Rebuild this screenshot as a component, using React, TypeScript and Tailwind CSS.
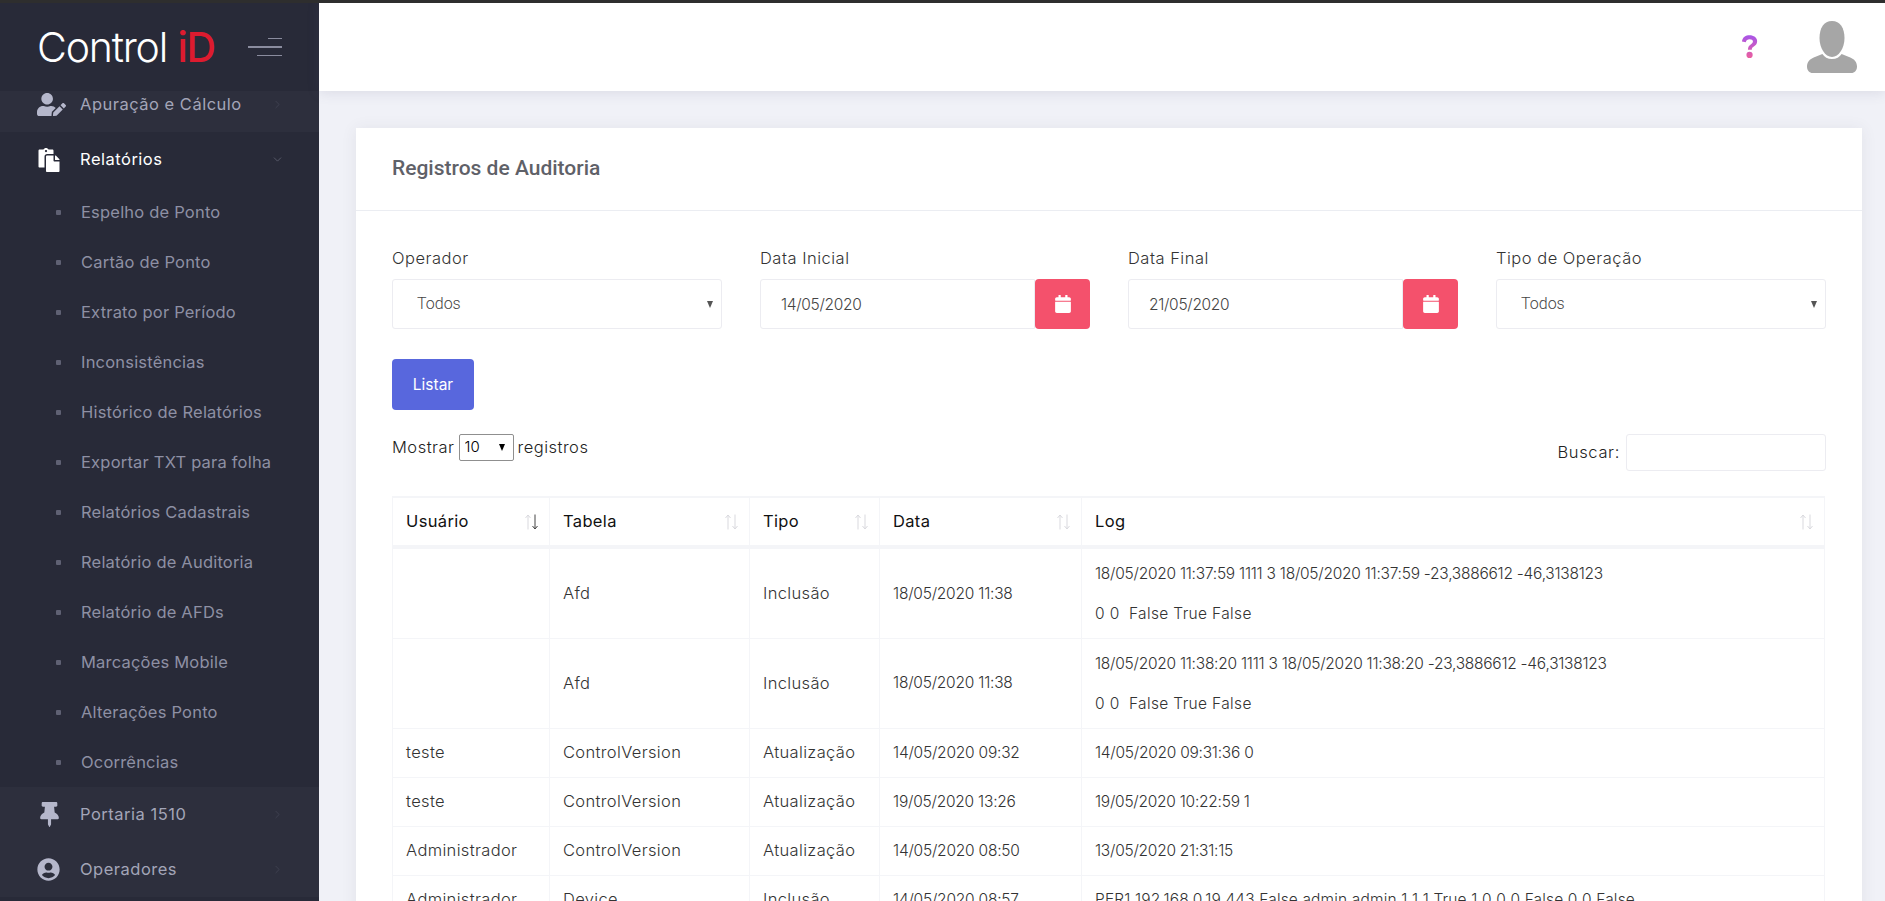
import { ChevronDown, ChevronRight } from 'lucide-react';
import { FaCalendar, FaPaste, FaThumbtack, FaUserCircle, FaUserEdit } from 'react-icons/fa';

const subItems = [
  'Espelho de Ponto',
  'Cartão de Ponto',
  'Extrato por Período',
  'Inconsistências',
  'Histórico de Relatórios',
  'Exportar TXT para folha',
  'Relatórios Cadastrais',
  'Relatório de Auditoria',
  'Relatório de AFDs',
  'Marcações Mobile',
  'Alterações Ponto',
  'Ocorrências',
];

const rows = [
  ['', 'Afd', 'Inclusão', '18/05/2020 11:38', '18/05/2020 11:37:59 1111 3 18/05/2020 11:37:59 -23,3886612 -46,3138123', '0 0  False True False'],
  ['', 'Afd', 'Inclusão', '18/05/2020 11:38', '18/05/2020 11:38:20 1111 3 18/05/2020 11:38:20 -23,3886612 -46,3138123', '0 0  False True False'],
  ['teste', 'ControlVersion', 'Atualização', '14/05/2020 09:32', '14/05/2020 09:31:36 0'],
  ['teste', 'ControlVersion', 'Atualização', '19/05/2020 13:26', '19/05/2020 10:22:59 1'],
  ['Administrador', 'ControlVersion', 'Atualização', '14/05/2020 08:50', '13/05/2020 21:31:15'],
  ['Administrador', 'Device', 'Inclusão', '14/05/2020 08:57', 'PER1 192.168.0.19 443 False admin admin 1 1 1 True 1 0 0 0 False 0 0 False'],
];

const columns = [
  { label: 'Usuário', width: 'w-[157px]', sorted: true },
  { label: 'Tabela', width: 'w-[200px]', sorted: false },
  { label: 'Tipo', width: 'w-[130px]', sorted: false },
  { label: 'Data', width: 'w-[202px]', sorted: false },
  { label: 'Log', width: 'w-auto', sorted: false },
];

const labelClass = 'mb-[9px] block text-[16.500px] font-light leading-6 tracking-[0.5px] text-[#333]';

const NavRow = ({
  icon,
  label,
  active,
  first,
  tint,
}: {
  icon: React.ReactNode;
  label: string;
  active?: boolean;
  first?: boolean;
  tint?: boolean;
}) => (
  <div
    className={`flex h-[55px] shrink-0 items-center pl-[37px] pr-[35px] ${first ? '-mt-[14px]' : ''} ${
      tint ? 'bg-[#2d2f3d]' : ''
    } ${active ? 'text-white' : 'text-[#a3a5b8]'}`}
  >
    <span className={`flex w-[43px] ${active ? 'text-white' : 'text-[#b5b7cb]'}`}>{icon}</span>
    <span className="grow text-[16.500px] tracking-[0.5px]">{label}</span>
    {active ? (
      <ChevronDown size={13} strokeWidth={1} className="text-[#7d7f90]" />
    ) : (
      <ChevronRight size={13} strokeWidth={1} className="text-[#4c4e5e]" />
    )}
  </div>
);

const DateField = ({ value }: { value: string }) => (
  <div className="flex h-[50px]">
    <input
      readOnly
      value={value}
      className="h-full min-w-0 grow rounded-l-[3px] border border-[#ececf1] pl-[20px] text-[15.500px] font-light tracking-[-0.3px] text-[#444] outline-none"
    />
    <button className="flex h-full w-[55px] shrink-0 items-center justify-center rounded-[4px] bg-[#f4516c] text-[18px] text-white">
      <FaCalendar />
    </button>
  </div>
);

const SelectField = () => (
  <div className="relative">
    <select className="h-[50px] w-full appearance-none rounded-[3px] border border-[#ececf1] bg-white pl-[24px] font-['Roboto',sans-serif] text-[16px] font-light text-[#444] outline-none">
      <option>Todos</option>
    </select>
    <span className="pointer-events-none absolute right-[9px] top-[22px] border-x-[3.500px] border-t-[7px] border-x-transparent border-t-[#555]" />
  </div>
);

const SortArrows = ({ sorted }: { sorted: boolean }) => (
  <svg width="13" height="16" viewBox="0 0 13 16" fill="none" strokeWidth="1" className="shrink-0">
    <path d="M3 15.500V1M.5 4 3 1l2.500 3" stroke="#d9d9de" />
    <path d="M10 .5V15M7.500 12l2.500 3 2.500-3" stroke={sorted ? '#444' : '#d9d9de'} />
  </svg>
);

const App = () => {
  return (
    <div className="relative flex h-[901px] w-full overflow-hidden bg-[#f0f1f7] font-['Inter',sans-serif]">
      <div className="absolute left-0 right-0 top-0 z-20 h-[3px] bg-[#2e2e2e]" />

      <aside className="flex w-[319px] shrink-0 flex-col bg-[#282a38]">
        <div className="relative z-10 flex h-[91px] shrink-0 items-center justify-between pl-[37px] pr-[37px] pt-[3px]">
          <span className="text-[41px] font-[350] leading-none tracking-[-1.200px] text-white">
            Control <span className="font-medium text-[#dd1b2f]">iD</span>
          </span>
          <div className="flex w-[34px] flex-col items-end gap-[7px]">
            <span className="h-px w-[14px] bg-[#8a8c9e]" />
            <span className="h-[2px] w-[34px] bg-[#8a8c9e]" />
            <span className="h-px w-[25px] bg-[#8a8c9e]" />
          </div>
        </div>
        <nav className="flex grow flex-col overflow-hidden">
          <NavRow first tint icon={<FaUserEdit size={29} />} label="Apuração e Cálculo" />
          <NavRow active icon={<FaPaste size={24} />} label="Relatórios" />
          {subItems.map((item) => (
            <div key={item} className="flex h-[50px] shrink-0 items-center pl-[56px] text-[16.500px] tracking-[0.2px] text-[#8e90a4]">
              <span className="mr-[20px] h-[5px] w-[5px] rounded-[1px] bg-[#5f6173]" />
              {item}
            </div>
          ))}
          <NavRow tint icon={<FaThumbtack size={25} />} label="Portaria 1510" />
          <NavRow tint icon={<FaUserCircle size={23} />} label="Operadores" />
        </nav>
      </aside>

      <main className="flex min-w-0 grow flex-col">
        <header className="flex h-[91px] shrink-0 items-center justify-end bg-white pr-[28px] pt-[3px] shadow-[0_2px_12px_rgba(90,95,130,0.14)]">
          <svg width="20" height="25" viewBox="0 0 22 28" className="mb-[2px] mr-[47px]">
            <defs>
              <linearGradient id="q" x1="0" y1="0" x2="0" y2="1">
                <stop offset="0" stopColor="#a855e8" />
                <stop offset="1" stopColor="#ea5f9f" />
              </linearGradient>
            </defs>
            <path
              d="M2 8.500C2.500 3.600 6.300 1.500 10.500 1.500c4.600 0 8.500 2.500 8.500 6.600 0 3-1.700 4.500-3.700 5.800-1.700 1.100-2.300 1.800-2.300 3.600H8.700c0-3 1.100-4.500 3.100-5.800 1.500-1 2.500-1.800 2.500-3.200 0-1.500-1.600-2.500-3.700-2.500-2.300 0-3.700 1-4.300 3.300ZM10.500 20a3.500 3.500 0 1 1 0 7 3.500 3.500 0 0 1 0-7Z"
              fill="url(#q)"
            />
          </svg>
          <svg width="50" height="52" viewBox="0 0 52 52" preserveAspectRatio="none" className="mb-[1px]">
            <path
              d="M26 0c8.500 0 13 7 13 17 0 10-6 19-13 19S13 27 13 17C13 7 17.500 0 26 0Z"
              fill="#a6a6a6"
            />
            <path
              d="M16 33c2 3 5.500 5 10 5s8-2 10-5l9 3.500c4 1.500 7 4.500 7 9 0 4-2.500 6.500-6 6.500H6c-3.500 0-6-2.500-6-6.500 0-4.500 3-7.500 7-9Z"
              fill="#a6a6a6"
            />
          </svg>
        </header>

        <section className="ml-[37px] mr-[23px] mt-[37px] grow bg-white shadow-[0_1px_15px_rgba(69,65,78,0.08)]">
          <div className="flex h-[83px] items-center border-b border-[#ebedf2] pl-[36px]">
            <h1 className="font-['Roboto',sans-serif] text-[21px] font-medium text-[#5f6168]">Registros de Auditoria</h1>
          </div>

          <div className="pl-[36px] pr-[36px] pt-[35px]">
            <div className="grid grid-cols-4 gap-x-[38px]">
              <div>
                <label className={labelClass}>Operador</label>
                <SelectField />
              </div>
              <div>
                <label className={labelClass}>Data Inicial</label>
                <DateField value="14/05/2020" />
              </div>
              <div>
                <label className={labelClass}>Data Final</label>
                <DateField value="21/05/2020" />
              </div>
              <div>
                <label className={labelClass}>Tipo de Operação</label>
                <SelectField />
              </div>
            </div>

            <button className="mt-[30px] block h-[51px] w-[82px] rounded-[4px] bg-[#5867dd] text-[15.500px] font-normal text-white">
              Listar
            </button>

            <div className="mt-[24px] flex h-[37px] items-start justify-between">
              <div className="flex items-center text-[16.500px] font-light tracking-[0.5px] text-[#222]">
                Mostrar
                <span className="relative mx-[4px]">
                  <select className="h-[27px] w-[55px] appearance-none rounded-[2px] border border-[#8f8f8f] bg-white pl-[5px] text-[15px] font-light tracking-normal text-black">
                    <option>10</option>
                  </select>
                  <span className="pointer-events-none absolute right-[9px] top-[10px] border-x-[3.500px] border-t-[7px] border-x-transparent border-t-black" />
                </span>
                registros
              </div>
              <div className="flex items-center text-[16.500px] font-light tracking-[0.65px] text-[#222]">
                Buscar:
                <input readOnly className="ml-[6px] h-[37px] w-[200px] rounded-[3px] border border-[#ececf1] outline-none" />
              </div>
            </div>

            <table className="mt-[25px] w-[1433px] table-fixed border-collapse border-t-2 border-[#f4f5f8] text-[16.500px] font-light tracking-[0.35px] text-[#333]">
              <thead>
                <tr className="h-[50px] border-b-4 border-[#f4f5f8]">
                  {columns.map((col) => (
                    <th key={col.label} className={`${col.width} border-x border-[#f4f5f8] pl-[13px] pr-[11px] text-left font-normal text-[#111]`}>
                      <div className="flex items-center justify-between">
                        {col.label}
                        <SortArrows sorted={col.sorted} />
                      </div>
                    </th>
                  ))}
                </tr>
              </thead>
              <tbody>
                {rows.map((row, i) => (
                  <tr key={i} className={`border-b border-[#f4f5f8] ${i === 0 ? 'h-[91px]' : i === 1 ? 'h-[90px]' : 'h-[49px]'}`}>
                    {row.slice(0, 3).map((cell, j) => (
                      <td key={j} className="border-x border-[#f4f5f8] pl-[13px]">
                        {cell}
                      </td>
                    ))}
                    <td className="border-x border-[#f4f5f8] pl-[13px] text-[15.500px] tracking-[-0.22px]">{row[3]}</td>
                    <td className="whitespace-pre border-x border-[#f4f5f8] pl-[13px] text-[15.500px] leading-6 tracking-[-0.25px]">
                      {i < 2 ? (
                        <>
                          <div className="mb-[16px] pt-[2px]">{row[4]}</div>
                          <div className="tracking-[0.35px]">{row[5]}</div>
                        </>
                      ) : (
                        <span className={i === 5 ? 'tracking-[0.15px]' : ''}>{row[4]}</span>
                      )}
                    </td>
                  </tr>
                ))}
              </tbody>
            </table>
          </div>
        </section>
      </main>
    </div>
  );
};

export default App;
